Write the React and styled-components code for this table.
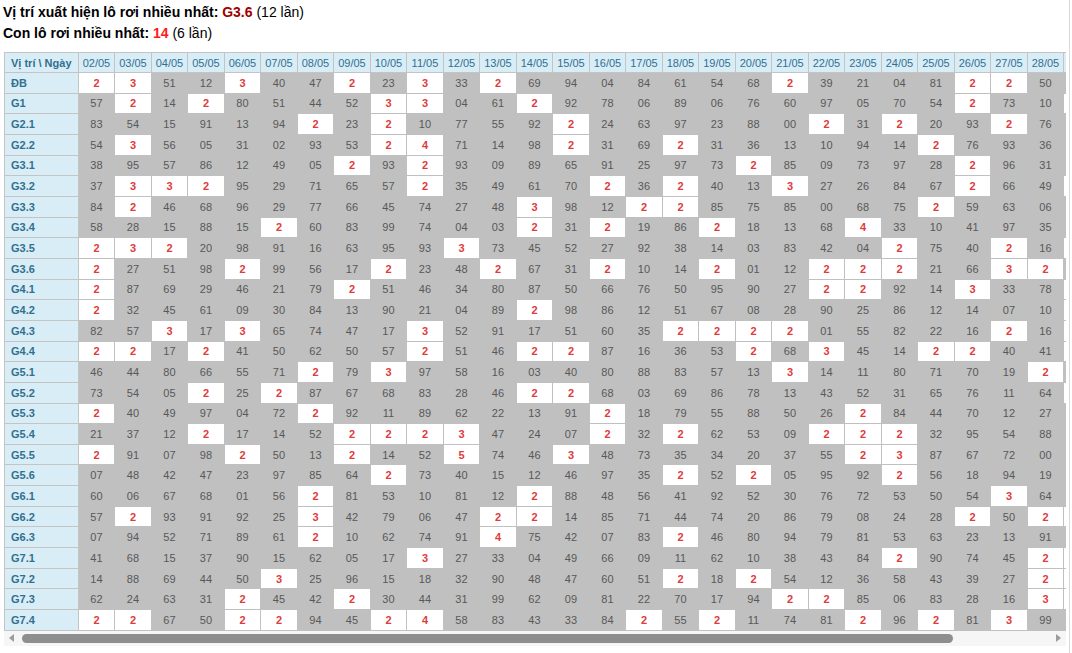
import React from 'react';
import styled, { createGlobalStyle } from 'styled-components';

const GlobalStyle = createGlobalStyle`
  html, body { margin: 0; padding: 0; background: #fff; }
  body { font-family: "Liberation Sans", Arial, sans-serif; }
`;

// 27 fully visible days, plus the first pixels of the next day's column (scrolled out of view)
const VISIBLE_DAYS = 27;
const DATES = Array.from({ length: VISIBLE_DAYS + 1 }, (_, i) => `${String(i + 2).padStart(2, '0')}/05`);

const RAW = [
  ['ĐB', '2 3 51 12 3 40 47 2 23 3 33 2 69 94 04 84 61 54 68 2 39 21 04 81 2 2 50 18'],
  ['G1', '57 2 14 2 80 51 44 52 3 3 04 61 2 92 78 06 89 06 76 60 97 05 70 54 2 73 10 2'],
  ['G2.1', '83 54 15 91 13 94 2 23 2 10 77 55 92 2 24 63 97 23 88 00 2 31 2 20 93 2 76 44'],
  ['G2.2', '54 3 56 05 31 02 93 53 2 4 71 14 98 2 31 69 2 31 36 13 10 94 14 2 76 93 36 59'],
  ['G3.1', '38 95 57 86 12 49 05 2 93 2 93 09 89 65 91 25 97 73 2 85 09 73 97 28 2 96 31 27'],
  ['G3.2', '37 3 3 2 95 29 71 65 57 2 35 49 61 70 2 36 2 40 13 3 27 26 84 67 2 66 49 2'],
  ['G3.3', '84 2 46 68 96 29 77 66 45 74 27 48 3 98 12 2 2 85 75 85 00 68 75 2 59 63 06 80'],
  ['G3.4', '58 28 15 88 15 2 60 83 99 74 04 03 2 31 2 19 86 2 18 13 68 4 33 10 41 97 35 62'],
  ['G3.5', '2 3 2 20 98 91 16 63 95 93 3 73 45 52 27 92 38 14 03 83 42 04 2 75 40 2 16 2'],
  ['G3.6', '2 27 51 98 2 99 56 17 2 23 48 2 67 31 2 10 14 2 01 12 2 2 2 21 66 3 2 35'],
  ['G4.1', '2 87 69 29 46 21 79 2 51 46 34 80 87 50 66 76 50 95 90 27 2 2 92 14 3 33 78 2'],
  ['G4.2', '2 32 45 61 09 30 84 13 90 21 04 89 2 98 86 12 51 67 08 28 90 25 86 12 14 07 10 2'],
  ['G4.3', '82 57 3 17 3 65 74 47 17 3 52 91 17 51 60 35 2 2 2 2 01 55 82 22 16 2 16 2'],
  ['G4.4', '2 2 17 2 41 50 62 50 57 2 51 46 2 2 87 16 36 53 2 68 3 45 14 2 2 40 41 2'],
  ['G5.1', '46 44 80 66 55 71 2 79 3 97 58 16 03 40 80 88 83 57 13 3 14 11 80 71 70 19 2 39'],
  ['G5.2', '73 54 05 2 25 2 87 67 68 83 28 46 2 2 68 03 69 86 78 13 43 52 31 65 76 11 64 2'],
  ['G5.3', '2 40 49 97 04 72 2 92 11 89 62 22 13 91 2 18 79 55 88 50 26 2 84 44 70 12 27 68'],
  ['G5.4', '21 37 12 2 17 14 52 2 2 2 3 47 24 07 2 32 2 62 53 09 2 2 2 32 95 54 88 47'],
  ['G5.5', '2 91 07 98 2 50 13 2 14 52 5 74 46 3 48 73 35 34 20 37 55 2 3 87 67 72 00 26'],
  ['G5.6', '07 48 42 47 23 97 85 64 2 73 40 15 12 46 97 35 2 52 2 05 95 92 2 56 18 94 19 81'],
  ['G6.1', '60 06 67 68 01 56 2 81 53 10 81 12 2 88 48 56 41 92 52 30 76 72 53 50 54 3 64 15'],
  ['G6.2', '57 2 93 91 92 25 3 42 79 06 47 2 2 14 85 71 44 74 20 86 79 08 24 28 2 50 2 2'],
  ['G6.3', '07 94 52 71 89 61 2 10 62 74 91 4 75 42 07 83 2 46 80 94 79 81 53 63 23 13 91 73'],
  ['G7.1', '41 68 15 37 90 15 62 05 17 3 27 33 04 49 66 09 11 62 10 38 43 84 2 90 74 45 2 2'],
  ['G7.2', '14 88 69 44 50 3 25 96 15 18 32 90 48 47 60 51 2 18 2 54 12 36 58 43 39 27 2 2'],
  ['G7.3', '62 24 63 31 2 45 42 2 30 44 31 99 62 09 81 22 70 17 94 2 2 85 06 83 28 16 3 2'],
  ['G7.4', '2 2 67 50 2 2 94 45 2 4 58 83 43 33 84 2 55 2 11 74 81 2 96 2 81 3 99 49'],
];

const ROWS = RAW.map(([label, values]) => ({ label, values: values.split(' ') }));

const Page = styled.div`
  box-sizing: content-box;
  width: 1062px;
  min-height: 651px;
  padding: 2px 3px 0 4px;
  border-right: 1px solid #d8d8d8;
`;

const Summary = styled.div`
  margin-left: -1px;
  font-size: 14px;
  line-height: 21px;
  color: #000;
`;

const Strong = styled.b`
  font-weight: bold;
`;

const Accent = styled.b`
  font-weight: bold;
  color: ${(p) => (p.$tone === 'dark' ? '#a00000' : '#ff1a1a')};
`;

const Scroller = styled.div`
  width: 1062px;
  margin-top: 8px;
  overflow: hidden;
`;

const Grid = styled.table`
  border-collapse: collapse;
  table-layout: fixed;
  width: ${73.7 + (VISIBLE_DAYS + 1) * 36.5}px;
  font-size: 11px;
`;

const LabelCol = styled.col`
  width: 73.7px;
`;

const DateCol = styled.col`
  width: 36.5px;
`;

const HeadRow = styled.tr`
  height: 20px;
`;

const BodyRow = styled.tr`
  height: 20.67px;
`;

const HeadCell = styled.th`
  padding: 0 ${(p) => (p.$corner ? '6px' : '0')};
  border: 1px solid #c4c4c4;
  background: #d9edf7;
  color: #31708f;
  font-weight: ${(p) => (p.$corner ? 'bold' : 'normal')};
  text-align: ${(p) => (p.$corner ? 'left' : 'center')};
  white-space: nowrap;
  overflow: hidden;
`;

const RowHead = styled.th`
  padding: 0 6px;
  border: 1px solid #c4c4c4;
  background: #d9edf7;
  color: #31708f;
  font-weight: bold;
  text-align: left;
  white-space: nowrap;
`;

const Cell = styled.td`
  padding: 0;
  border: 1px solid #c0c0c0;
  background: ${(p) => (p.$hit ? '#ffffff' : '#c0c0c0')};
  color: ${(p) => (p.$hit ? '#e03b3b' : '#585858')};
  font-weight: ${(p) => (p.$hit ? 'bold' : 'normal')};
  text-align: center;
  white-space: nowrap;
  overflow: hidden;
`;

const ScrollTrack = styled.div`
  display: flex;
  align-items: center;
  width: 1062px;
  height: 15px;
  background: #f6f6f6;
`;

const ArrowButton = styled.div`
  display: flex;
  flex: none;
  align-items: center;
  justify-content: center;
  width: 15px;
  height: 15px;
`;

const Thumb = styled.div`
  flex: none;
  width: 931px;
  height: 9px;
  margin-left: 3px;
  border-radius: 5px;
  background: #8e8e8e;
`;

const Spacer = styled.div`
  flex: 1;
`;

function Arrow({ dir }) {
  return (
    <svg width="5" height="8" viewBox="0 0 5 8">
      <polygon points={dir === 'left' ? '5,0 0,4 5,8' : '0,0 5,4 0,8'} fill="#9c9c9c" />
    </svg>
  );
}

export default function App() {
  return (
    <>
      <GlobalStyle />
      <Page>
        <Summary>
          <Strong>Vị trí xuất hiện lô rơi nhiều nhất: </Strong>
          <Accent $tone="dark">G3.6</Accent> (12 lần)
          <br />
          <Strong>Con lô rơi nhiều nhất: </Strong>
          <Accent>14</Accent> (6 lần)
        </Summary>
        <Scroller>
          <Grid>
            <colgroup>
              <LabelCol />
              {DATES.map((d) => (
                <DateCol key={d} />
              ))}
            </colgroup>
            <thead>
              <HeadRow>
                <HeadCell $corner>Vị trí \ Ngày</HeadCell>
                {DATES.map((d, i) => (
                  <HeadCell key={d}>{i < VISIBLE_DAYS ? d : null}</HeadCell>
                ))}
              </HeadRow>
            </thead>
            <tbody>
              {ROWS.map((row) => (
                <BodyRow key={row.label}>
                  <RowHead>{row.label}</RowHead>
                  {row.values.map((v, i) => (
                    <Cell key={i} $hit={v.length === 1}>
                      {i < VISIBLE_DAYS ? v : null}
                    </Cell>
                  ))}
                </BodyRow>
              ))}
            </tbody>
          </Grid>
        </Scroller>
        <ScrollTrack>
          <ArrowButton>
            <Arrow dir="left" />
          </ArrowButton>
          <Thumb />
          <Spacer />
          <ArrowButton>
            <Arrow dir="right" />
          </ArrowButton>
        </ScrollTrack>
      </Page>
    </>
  );
}
